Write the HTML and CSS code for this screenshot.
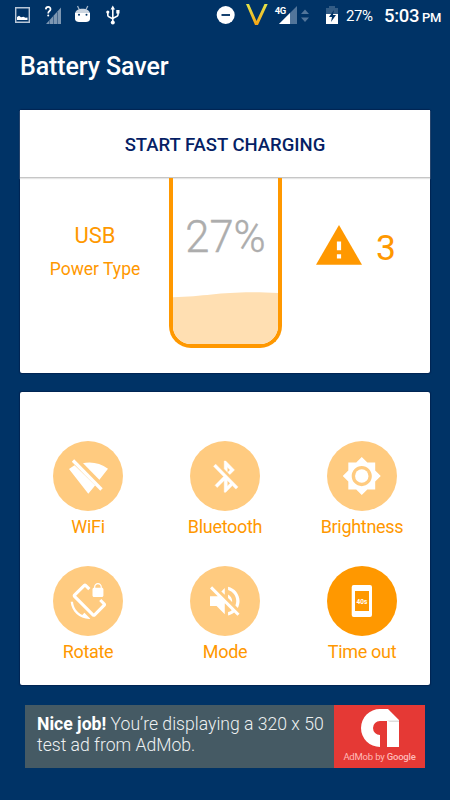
FILE: index.html
```html
<!DOCTYPE html>
<html lang="en">
<head>
<meta charset="utf-8">
<title>Battery Saver</title>
<link rel="stylesheet" href="styles.css">
</head>
<body>
<div class="statusbar">
  <svg class="notifications" width="125" height="32" viewBox="0 0 125 32" aria-hidden="true">
    <path d="M15.700 7.700h13.600v14.600H15.700z" fill="none" stroke="#b9c7d7" stroke-width="1.400"/>
    <path d="M17 20v-3l2-1.300 2 1.500 2.500-.4 2 1 2-.3V20z" fill="#fff"/>
    <path d="M46 24L61 7.500V24z" fill="#7d97b2"/>
    <path d="M49.500 20v4M53.500 16v8M57.500 12v12" stroke="#46698f" stroke-width="1"/>
    <path d="M45.800 9.400c.2-3.500 5-3.200 4.700 0-.2 1.800-2.300 2-2.300 4" fill="none" stroke="#fff" stroke-width="1.700"/>
    <circle cx="48.200" cy="15.400" r="1" fill="#fff"/>
    <path d="M77.500 6l2 4M87.800 6l-2 4" stroke="#9fb2c6" stroke-width="1.300"/>
    <path d="M75 14c0-7 15-7 15 0z" fill="#cbd5e0"/>
    <path d="M75 13h15v6c0 2-2 3-4 3h-7c-2 0-4-1-4-3z" fill="#fff"/>
    <circle cx="79" cy="14.700" r="1" fill="#003366"/><circle cx="86.500" cy="14.700" r="1" fill="#003366"/>
    <path d="M112.800 8v14M107.800 12v3.500c0 2 5 2 5 4M118 12v3c0 2-5 2-5 4" fill="none" stroke="#fff" stroke-width="1.600"/>
    <path d="M110.600 9.500l2.200-4 2.200 4zM116.300 10h3.200v3.400h-3.200z" fill="#fff"/>
    <circle cx="107.800" cy="12" r="1.600" fill="#fff"/><circle cx="112.800" cy="22.600" r="2" fill="#fff"/>
  </svg>
  <svg class="system" width="130" height="32" viewBox="212 0 130 32" aria-hidden="true">
    <defs><linearGradient id="gold" x1="0" y1="0" x2="0" y2="1"><stop offset="0" stop-color="#e4e54a"/><stop offset="1" stop-color="#f6a313"/></linearGradient></defs>
    <circle cx="225.700" cy="15" r="9" fill="#fff"/><path d="M221.500 15h8.500" stroke="#164270" stroke-width="2"/>
    <path d="M246 4h3l7.500 17L264.500 4h3.200L258 25h-3z" fill="url(#gold)"/>
    <path d="M279 24L297 6v18z" fill="#52759a"/><path d="M279 24l11-11v11z" fill="#fff"/>
    <text x="274.700" y="14" class="network">4G</text>
    <path d="M301 14l4-4.500 4 4.500zM301 17.500l4 4.500 4-4.500z" fill="#52759a"/>
    <path d="M326 8h3V6h6v2h3v6h-12z" fill="#335c85"/><path d="M326 14h12v10h-12z" fill="#fff"/>
    <path d="M334 10l-5 7h3l-1 5 5-7h-3z" fill="#003366"/>
  </svg>
  <span class="level">27%</span>
  <span class="clock">5:03 <small>PM</small></span>
</div>
<h1 class="title">Battery Saver</h1>
<main>
  <section class="card charge">
    <button class="start">START FAST CHARGING</button>
    <div class="summary">
      <div class="power"><strong>USB</strong><span>Power Type</span></div>
      <div class="battery">
        <span class="percent">27%</span>
        <svg class="liquid" viewBox="0 0 106 50" preserveAspectRatio="none"><path d="M0 5C38 4 55-2 106 1v49H0z" fill="#ffdfb2"/></svg>
      </div>
      <div class="issues">
        <svg width="46" height="40" viewBox="0 0 46 40"><path d="M0 39.700L23 0l23 39.700z" fill="#ff9800"/><path d="M20.900 16.500h4.200v8.800h-4.200zM20.900 29.300h4.200v4.200h-4.200z" fill="#fff"/></svg>
        <span>3</span>
      </div>
    </div>
  </section>
  <section class="card toggles">
    <div class="toggle">
      <svg class="disc" viewBox="0 0 70 70"><path d="M16 28l5.500-3.800L45.300 47.500l-3.200-3-6.800 8.200zM28.800 22.500C38 20 47 22 55 27.700L46 39.200z"/><path d="M24 18.500l27 27.500" class="slash-gap"/><path d="M20 19.500l28.500 29" class="slash"/></svg>
      <span>WiFi</span>
    </div>
    <div class="toggle">
      <svg class="disc" viewBox="0 0 70 70"><path transform="translate(17.400 16.900) scale(1.530 1.560)" d="M13 5.830l1.880 1.880-1.600 1.600 1.410 1.410 3.020-3.020L12 2h-1v5.030l2 2v-3.200zM5.410 4L4 5.410 10.590 12 5 17.590 6.410 19 11 14.410V22h1l4.290-4.290 2.300 2.290L20 18.590 5.410 4zM13 18.170v-3.760l1.880 1.880L13 18.170z" class="bold"/></svg>
      <span>Bluetooth</span>
    </div>
    <div class="toggle">
      <svg class="disc" viewBox="0 0 70 70"><g transform="translate(14.600 14.900) scale(1.680)"><path d="M20 15.310L23.310 12 20 8.690V4h-4.690L12 .69 8.690 4H4v4.690L.69 12 4 15.310V20h4.690L12 23.310 15.310 20H20v-4.690zM12 18c-3.310 0-6-2.690-6-6s2.690-6 6-6 6 2.690 6 6-2.690 6-6 6z"/><circle cx="12" cy="12" r="4"/></g></svg>
      <span>Brightness</span>
    </div>
    <div class="toggle">
      <svg class="disc" viewBox="0 0 70 70"><path transform="translate(16.100 17) scale(1.560)" d="M23.250 12.770l-2.570-2.570-1.410 1.410 2.220 2.220-5.660 5.660L4.510 8.170l5.660-5.660 2.100 2.100 1.410-1.410L11.230.75c-.59-.59-1.540-.59-2.120 0L2.750 7.110c-.59.59-.59 1.540 0 2.120l12.020 12.020c.59.59 1.540.59 2.120 0l6.360-6.360c.59-.59.59-1.540 0-2.120zM8.470 20.480C5.200 18.940 2.860 15.760 2.500 12H1c.51 6.160 5.660 11 11.950 11l.66-.03-3.810-3.820-1.330 1.330zM16 9h5c.55 0 1-.45 1-1V4c0-.55-.45-1-1-1v-.5C21 1.120 19.880 0 18.500 0S16 1.120 16 2.500V3c-.55 0-1 .45-1 1v4c0 .55.45 1 1 1zm.8-6.500c0-.94.76-1.700 1.700-1.700s1.700.76 1.700 1.700V3h-3.400v-.5z"/></svg>
      <span>Rotate</span>
    </div>
    <div class="toggle">
      <svg class="disc" viewBox="0 0 70 70"><path transform="translate(15.100 15.400) scale(1.640)" d="M16.500 12c0-1.770-1.020-3.290-2.500-4.030v2.210l2.450 2.450c.03-.2.05-.41.05-.63zm2.500 0c0 .94-.2 1.820-.54 2.640l1.510 1.510C20.630 14.910 21 13.500 21 12c0-4.280-2.990-7.860-7-8.770v2.060c2.890.86 5 3.540 5 6.710zM4.270 3L3 4.270 7.730 9H3v6h4l5 5v-6.730l4.250 4.250c-.67.52-1.420.93-2.250 1.180v2.060c1.380-.31 2.630-.95 3.690-1.810L19.730 21 21 19.730l-9-9L4.270 3zM12 4L9.910 6.090 12 8.180V4z"/></svg>
      <span>Mode</span>
    </div>
    <div class="toggle active">
      <svg class="disc" viewBox="0 0 70 70"><path fill-rule="evenodd" d="M26.700 19h16.300q2 0 2 2v28q0 2-2 2H26.700q-2 0-2-2V21q0-2 2-2zM28 25v20h14V25z"/><text x="35" y="37.500" class="seconds">40s</text></svg>
      <span>Time out</span>
    </div>
  </section>
</main>
<aside class="ad">
  <p><b>Nice job!</b> You’re displaying a 320 x 50<br>test ad from AdMob.</p>
  <div class="brand">
    <svg width="38" height="38" viewBox="0 0 38 38"><path d="M19 0h8l11 11v27H26V12h-7a7 7 0 0 0 0 14v12A19 19 0 0 1 19 0z" fill="#fff"/><path d="M26 11.500h12v1.500H29z" fill="#ddd"/></svg>
    <span>AdMob by <b>Google</b></span>
  </div>
</aside>
</body>
</html>
```
FILE: styles.css
```css
* { box-sizing: border-box; }
body {
  margin: 0;
  width: 450px;
  height: 800px;
  overflow: hidden;
  background: #003366;
  font-family: Roboto, sans-serif;
  color: #ff9800;
}
svg { display: block; flex: none; }
.statusbar { display: flex; height: 32px; color: #fff; }
.system { margin-left: 87px; }
.network { font: bold 9.5px Roboto, sans-serif; fill: #fff; letter-spacing: -0.5px; }
.level { margin-left: 4px; width: 38px; font-size: 15px; line-height: 32px; letter-spacing: -0.4px; }
.clock { font-size: 18.5px; line-height: 32px; font-weight: 500; white-space: nowrap; letter-spacing: -0.3px; }
.clock small { font-size: 13px; margin-left: -1.5px; }
.title { margin: 0; padding: 20px 20px 0; height: 78px; font-size: 25px; line-height: 30px; font-weight: 500; color: #fff; letter-spacing: -0.1px; }
main { display: flex; flex-direction: column; gap: 19px; padding: 0 20px; }
.card { background: #fff; border-radius: 2px; box-shadow: 0 0 1px 1px #002453; }
.charge { height: 263px; }
.start {
  display: block; width: 100%; height: 68px; padding: 2px 0 0; border: 0;
  border-bottom: 1px solid #c6c6c6; background: #fff; box-shadow: 0 1px 1px #e6e6e6;
  font: 500 18.5px Roboto, sans-serif; color: #061f65;
}
.summary { display: grid; grid-template-columns: 149px 113px 148px; height: 195px; }
.power { display: flex; flex-direction: column; align-items: center; padding: 45px 0 0 1px; font-size: 17.5px; line-height: 24px; }
.power strong { font-size: 22px; line-height: 26px; font-weight: 400; margin-bottom: 8px; }
.battery { display: flex; flex-direction: column; height: 170px; border: 4px solid #ff9800; border-top: 0; border-radius: 0 0 22px 22px; overflow: hidden; }
.percent { height: 114px; padding-top: 34px; text-align: center; font-size: 43.5px; line-height: 52px; font-weight: 300; color: #adadad; -webkit-text-stroke: 0.4px #adadad; }
.liquid { width: 105px; height: 52px; }
.issues { display: flex; align-items: center; height: 87px; padding-left: 34px; margin-top: 23px; font-size: 35.5px; line-height: 40px; }
.issues span { margin: 6px 0 0 14px; }
.toggles { display: grid; grid-template-columns: 136px 138px 136px; grid-auto-rows: 125px; height: 293px; padding-top: 49px; }
.toggle { display: flex; flex-direction: column; align-items: center; font-size: 18px; line-height: 24px; letter-spacing: -0.3px; gap: 4px; }
.disc { width: 70px; height: 70px; border-radius: 50%; background: #ffcb80; fill: #fff; }
.active .disc { background: #ff9800; }
.slash, .slash-gap { fill: none; stroke: #fff; stroke-width: 3.3; }
.slash-gap { stroke: #ffcb80; }
.bold { stroke: #fff; stroke-width: 0.3; }
.seconds { font: bold 6.5px Roboto, sans-serif; text-anchor: middle; letter-spacing: 0; }
.ad { display: flex; width: 400px; height: 63px; margin: 20px 0 0 25px; background: #455a64; color: #eef1f2; }
.ad p { margin: 0; width: 309px; padding: 9px 0 0 12px; font-size: 17.6px; line-height: 21px; font-weight: 300; white-space: nowrap; }
.ad p b { font-weight: 700; color: #fff; }
.brand { display: flex; flex-direction: column; align-items: center; width: 91px; padding-top: 4px; background: #e53935; font-size: 9.5px; line-height: 16px; letter-spacing: -0.2px; color: #ffb9b7; white-space: nowrap; }
.brand span { margin-top: 2px; }
.brand b { font-weight: 500; }
```
